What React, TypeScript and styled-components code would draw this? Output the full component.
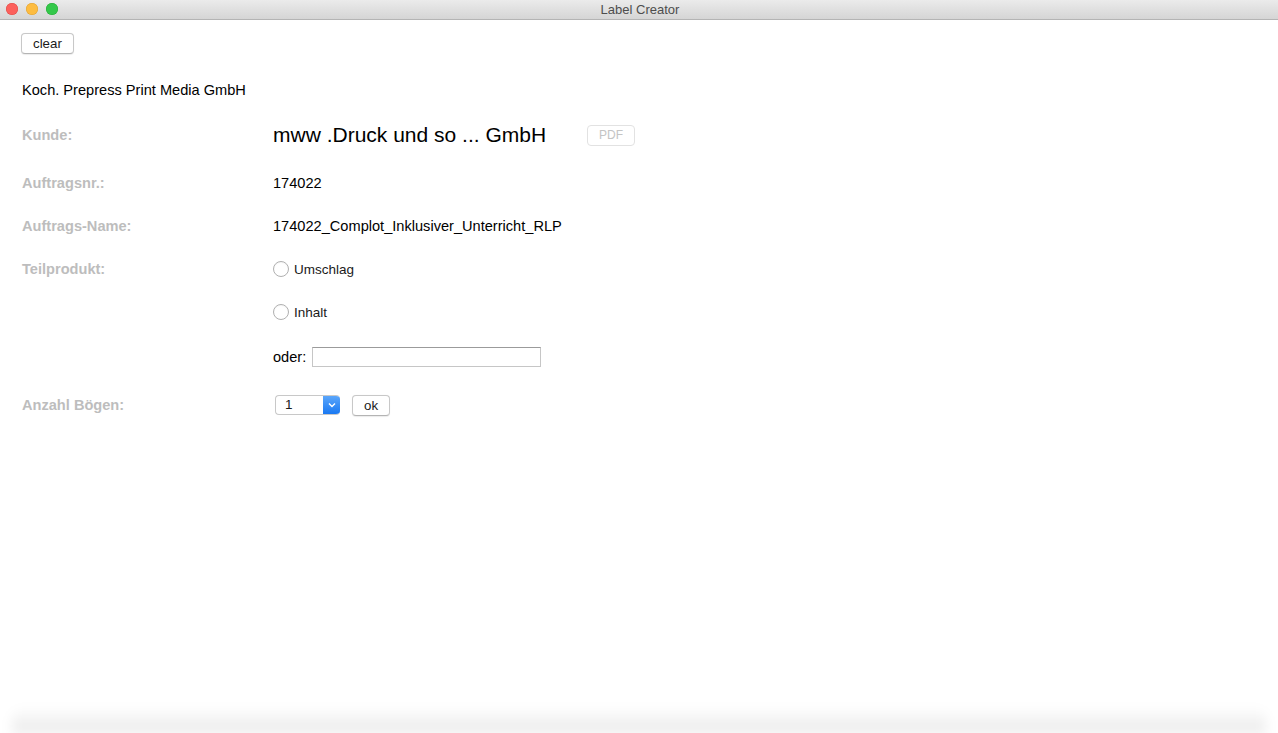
import * as React from 'react'
import styled, { createGlobalStyle } from 'styled-components'

const GlobalStyle = createGlobalStyle`
  html, body {
    margin: 0;
    padding: 0;
    background: #fff;
  }
  body {
    font-family: 'Liberation Sans', Arial, Helvetica, sans-serif;
    color: #000;
  }
`

interface RowSpec {
  label: string
  height: number
  content: React.ReactNode
}

export default function App() {
  const rows: RowSpec[] = [
    {
      label: 'Kunde:',
      height: 48,
      content: (
        <>
          <CustomerName>mww .Druck und so ... GmbH</CustomerName>
          <PdfButton disabled>PDF</PdfButton>
        </>
      ),
    },
    { label: 'Auftragsnr.:', height: 48, content: <Value>174022</Value> },
    {
      label: 'Auftrags-Name:',
      height: 38,
      content: <Value>174022_Complot_Inklusiver_Unterricht_RLP</Value>,
    },
    {
      label: 'Teilprodukt:',
      height: 48,
      content: (
        <RadioLabel>
          <Radio /> Umschlag
        </RadioLabel>
      ),
    },
    {
      label: '',
      height: 38,
      content: (
        <RadioLabel>
          <Radio /> Inhalt
        </RadioLabel>
      ),
    },
    {
      label: '',
      height: 52,
      content: (
        <>
          <Value>oder:</Value>
          <TextInput />
        </>
      ),
    },
    {
      label: 'Anzahl Bögen:',
      height: 44,
      content: (
        <>
          <Select>
            <SelectValue>1</SelectValue>
            <SelectArrow>
              <svg width="8" height="6" viewBox="0 0 8 6">
                <path d="M1 1.5 L4 4.5 L7 1.5" fill="none" stroke="#fff" strokeWidth="1.4" />
              </svg>
            </SelectArrow>
          </Select>
          <Button>ok</Button>
        </>
      ),
    },
  ]

  return (
    <Window>
      <GlobalStyle />
      <TitleBar>
        <Lights>
          <Light $color="#fc605c" $border="#de4a45" />
          <Light $color="#fdbc40" $border="#dea033" />
          <Light $color="#34c84a" $border="#27aa35" />
        </Lights>
        <Title>Label Creator</Title>
      </TitleBar>
      <Content>
        <Button>clear</Button>
        <Company>Koch. Prepress Print Media GmbH</Company>
        <Form>
          {rows.map((row, i) => (
            <FormRow key={i} $h={row.height}>
              <Label>{row.label}</Label>
              <Field>{row.content}</Field>
            </FormRow>
          ))}
        </Form>
      </Content>
      <Shade />
    </Window>
  )
}

const Window = styled.div`
  width: 1278px;
  height: 733px;
  display: flex;
  flex-direction: column;
  overflow: hidden;
`

const TitleBar = styled.div`
  height: 19px;
  flex: none;
  position: relative;
  display: flex;
  align-items: center;
  justify-content: center;
  background: linear-gradient(#ebebeb, #d5d5d5);
  border-bottom: 1px solid #b4b4b4;
`

const Lights = styled.div`
  position: absolute;
  left: 6px;
  top: 3px;
  display: flex;
  gap: 8px;
`

const Light = styled.span<{ $color: string; $border: string }>`
  width: 12px;
  height: 12px;
  border-radius: 50%;
  background: ${(p) => p.$color};
  box-shadow: inset 0 0 0 0.5px ${(p) => p.$border};
`

const Title = styled.div`
  font-size: 13px;
  color: #4d4d4d;
  padding-left: 2px;
`

const Content = styled.div`
  flex: 1;
  padding: 13px 21px 0;
  display: flex;
  flex-direction: column;
  align-items: flex-start;
`

const Button = styled.button`
  height: 21px;
  padding: 0 11px;
  font-family: inherit;
  font-size: 13.3px;
  color: #1a1a1a;
  background: #fff;
  border: 1px solid #c8c8c8;
  border-bottom-color: #b4b4b4;
  border-radius: 4px;
  box-shadow: 0 0.5px 1px rgba(0, 0, 0, 0.08);
`

const Company = styled.div`
  margin-top: 27px;
  margin-left: 1px;
  font-size: 14.6px;
  line-height: 18px;
`

const Form = styled.div`
  margin-top: 12px;
  margin-left: 1px;
  display: flex;
  flex-direction: column;
`

const FormRow = styled.div<{ $h: number }>`
  height: ${(p) => p.$h}px;
  display: grid;
  grid-template-columns: 251px auto;
  align-items: center;
`

const Label = styled.div`
  font-size: 14.6px;
  font-weight: bold;
  color: #bdbdbd;
`

const Field = styled.div`
  display: flex;
  align-items: center;
  gap: 6px;
`

const Value = styled.span`
  font-size: 14.6px;
`

const CustomerName = styled.span`
  font-size: 21px;
  margin-right: 35px;
`

const PdfButton = styled.button`
  height: 21px;
  width: 48px;
  padding: 0;
  font-family: inherit;
  font-size: 12px;
  color: #c4c4c4;
  background: #fff;
  border: 1px solid #e2e2e2;
  border-radius: 4px;
`

const RadioLabel = styled.label`
  display: flex;
  align-items: center;
  gap: 5px;
  font-size: 13.5px;
  color: #1a1a1a;
`

const Radio = styled.span`
  width: 14px;
  height: 14px;
  border-radius: 50%;
  border: 1px solid #b0b0b0;
  background: #fff;
  box-shadow: inset 0 1px 1px rgba(0, 0, 0, 0.04);
`

const TextInput = styled.input`
  width: 225px;
  height: 16px;
  padding: 1px;
  border: 1px solid #c6c6c6;
  border-top-color: #9b9b9b;
  font-family: inherit;
  font-size: 13px;
  outline: none;
`

const Select = styled.div`
  margin-left: 2px;
  width: 65px;
  height: 20px;
  display: flex;
  border: 1px solid #c8c8c8;
  border-right: none;
  border-radius: 4px;
  overflow: hidden;
  margin-right: 6px;
  box-sizing: border-box;
`

const SelectValue = styled.div`
  flex: 1;
  font-size: 13.5px;
  line-height: 18px;
  padding-left: 9px;
  color: #1a1a1a;
`

const SelectArrow = styled.div`
  width: 17px;
  display: flex;
  align-items: center;
  justify-content: center;
  background: linear-gradient(#5aa6fb, #1a79f2);
`

const Shade = styled.div`
  flex: none;
  height: 26px;
  margin: 0 12px;
  border-radius: 14px 14px 0 0;
  background: linear-gradient(rgba(255, 255, 255, 0), rgba(0, 0, 0, 0.09));
  filter: blur(6px);
`
